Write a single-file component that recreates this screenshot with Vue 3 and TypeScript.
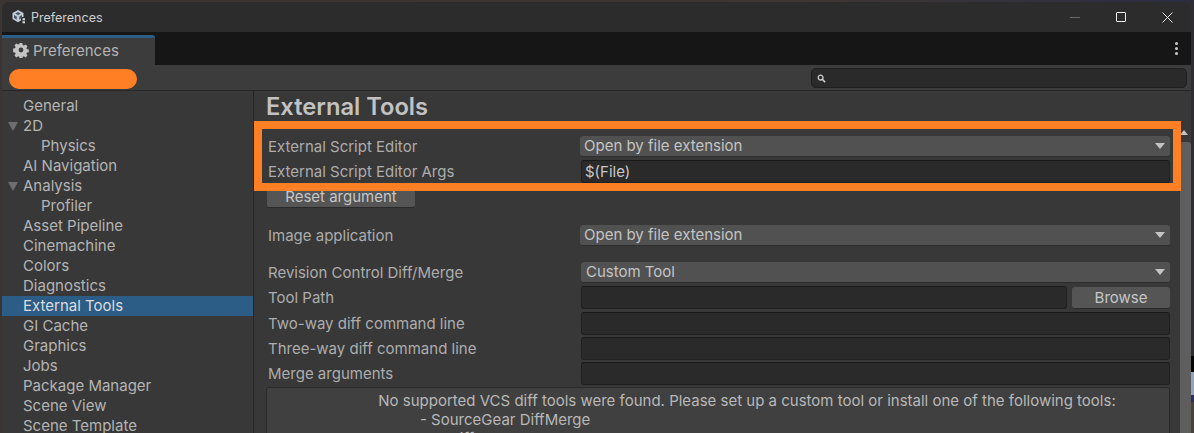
<script setup lang="ts">
interface Cat { label: string; level: number; open?: boolean; selected?: boolean }
const cats: Cat[] = [
  { label: 'General', level: 0 },
  { label: '2D', level: 0, open: true },
  { label: 'Physics', level: 1 },
  { label: 'AI Navigation', level: 0 },
  { label: 'Analysis', level: 0, open: true },
  { label: 'Profiler', level: 1 },
  { label: 'Asset Pipeline', level: 0 },
  { label: 'Cinemachine', level: 0 },
  { label: 'Colors', level: 0 },
  { label: 'Diagnostics', level: 0 },
  { label: 'External Tools', level: 0, selected: true },
  { label: 'GI Cache', level: 0 },
  { label: 'Graphics', level: 0 },
  { label: 'Jobs', level: 0 },
  { label: 'Package Manager', level: 0 },
  { label: 'Scene View', level: 0 },
  { label: 'Scene Template', level: 0 },
]
</script>

<template>
  <div class="desktop">
    <div class="window">
      <header class="titlebar">
        <svg class="unity" width="16" height="16" viewBox="0 0 16 16">
          <path d="M7 1 12.5 4V10L7 13.2 1.5 10V4Z" fill="#c3ccd6" />
          <path d="M7 3 4.2 4.6 7 6.2 9.8 4.6ZM3 6V9L5.8 10.7V7.6ZM11 6 8.2 7.6V10.7L11 9Z" fill="#4a5a6e" />
          <rect x="10" y="8" width="5.5" height="7.5" rx="1.5" fill="#2c2c2c" />
          <path d="M11.5 9.2h2.5v2h-2.5ZM11.5 12.2h2.5v2h-2.5Z" fill="#d4dae0" />
        </svg>
        <span class="title">Preferences</span>
        <div class="caption">
          <span class="min"></span>
          <span class="max"></span>
          <svg width="11" height="11" viewBox="0 0 11 11"><path d="M.5.5 10.5 10.5M10.5.5.5 10.5" stroke="#e8e8e8" stroke-width="1" fill="none" /></svg>
        </div>
      </header>

      <div class="tabstrip">
        <div class="tab">
          <svg width="16" height="16" viewBox="0 0 16 16">
            <path fill="#c4c4c4" fill-rule="evenodd" d="M6.7 1h2.6l.4 2 1.2.5 1.7-1.1 1.9 1.9-1.1 1.7.5 1.2 2 .4v2.6l-2 .4-.5 1.2 1.1 1.7-1.9 1.9-1.7-1.1-1.2.5-.4 2H6.7l-.4-2-1.2-.5-1.7 1.1-1.9-1.9 1.1-1.7-.5-1.2-2-.4V6.6l2-.4.5-1.2-1.1-1.7 1.9-1.9 1.7 1.1 1.2-.5ZM8 5.6a2.4 2.4 0 1 0 0 4.8 2.4 2.4 0 0 0 0-4.8Z" />
          </svg>
          <span>Preferences</span>
        </div>
        <div class="kebab"><i></i><i></i><i></i></div>
      </div>

      <div class="toolbar">
        <div class="pill"></div>
        <div class="search">
          <svg width="9" height="9" viewBox="0 0 9 9"><circle cx="3.6" cy="3.6" r="2.4" fill="none" stroke="#d0d0d0" stroke-width="1.3" /><path d="M5.4 5.4 8.2 8.2" stroke="#d0d0d0" stroke-width="1.5" /></svg>
        </div>
      </div>

      <div class="body">
        <nav class="sidebar">
          <div v-for="c in cats" :key="c.label" class="cat" :class="{ selected: c.selected, sub: c.level === 1 }">
            <span v-if="c.open" class="fold"></span>
            {{ c.label }}
          </div>
        </nav>

        <main class="main">
          <h1>External Tools</h1>

          <div class="row r-first">
            <label>External Script Editor</label>
            <div class="drop">Open by file extension<span class="arrow"></span></div>
          </div>
          <div class="row r-args">
            <label>External Script Editor Args</label>
            <div class="input">$(File)</div>
          </div>
          <button class="btn reset" type="button">Reset argument</button>

          <div class="row r-image">
            <label>Image application</label>
            <div class="drop">Open by file extension<span class="arrow"></span></div>
          </div>
          <div class="row r-rev">
            <label>Revision Control Diff/Merge</label>
            <div class="drop rev">Custom Tool<span class="arrow"></span></div>
          </div>
          <div class="row r-tool">
            <label>Tool Path</label>
            <div class="toolfield">
              <div class="input"></div>
              <button class="btn browse" type="button">Browse</button>
            </div>
          </div>
          <div class="row r-input r-two">
            <label>Two-way diff command line</label>
            <div class="input"></div>
          </div>
          <div class="row r-input">
            <label>Three-way diff command line</label>
            <div class="input"></div>
          </div>
          <div class="row r-input">
            <label>Merge arguments</label>
            <div class="input"></div>
          </div>

          <div class="help">
            <p>No supported VCS diff tools were found. Please set up a custom tool or install one of the following tools:</p>
            <p class="tool">- SourceGear DiffMerge</p>
            <p class="tool">- TkDiff</p>
          </div>
        </main>

        <div class="scrollbar">
          <span class="up"></span>
          <span class="thumb"></span>
        </div>

        <div class="highlight"></div>
      </div>
    </div>
  </div>
</template>

<style>
html, body { margin: 0; background: #2b2725; overflow: hidden; }
</style>

<style scoped>
.desktop {
  width: 1194px;
  height: 433px;
  padding: 2px 3px 0 2px;
  box-sizing: border-box;
  overflow: hidden;
  background:
    linear-gradient(180deg, #2f2d33 0 356px, #050505 356px 372px, #8fa6ba 372px 395px, #2a2f66 395px 402px, #4a4238 402px) right top / 3px 100% no-repeat,
    linear-gradient(90deg, #3a3432 0%, #3c3735 70%, #2b2c40 100%);
  font-family: Inter, "Liberation Sans", sans-serif;
  color: #c4c4c4;
}
.window {
  height: 431px;
  display: flex;
  flex-direction: column;
  background: #383838;
  border-radius: 7px 7px 0 0;
  overflow: hidden;
}
.titlebar {
  height: 30px;
  flex: none;
  display: flex;
  align-items: center;
  background: #2c2c2c;
  padding-left: 9px;
  box-sizing: border-box;
}
.title { margin-left: 4px; font-size: 12.5px; color: #cfcfcf; }
.caption { margin-left: auto; display: flex; align-items: center; padding-right: 18px; }
.min { width: 10px; height: 1px; background: #6a6a6a; margin-right: 36px; }
.max { width: 8px; height: 8px; border: 1px solid #f0f0f0; border-radius: 1px; margin-right: 36px; }
.tabstrip {
  height: 33px;
  flex: none;
  display: flex;
  background: #161616;
  justify-content: space-between;
}
.tab {
  width: 153px;
  margin-top: 3px;
  box-sizing: border-box;
  background: #3c3c3c;
  border-top: 3px solid #2c5d87;
  border-top-right-radius: 3px;
  display: flex;
  align-items: center;
  gap: 4px;
  padding: 0 0 3px 11px;
  font-size: 15px;
  color: #b4b4b4;
}
.kebab { display: flex; flex-direction: column; justify-content: center; gap: 2px; padding-right: 13px; }
.kebab i { width: 3px; height: 3px; background: #c8c8c8; border-radius: 50%; display: block; }
.toolbar {
  height: 26px;
  flex: none;
  box-sizing: border-box;
  background: #3c3c3c;
  display: flex;
  align-items: center;
  justify-content: space-between;
  padding: 0 4px 0 7px;
  border-bottom: 1px solid #262626;
}
.pill { width: 128px; height: 20px; border-radius: 10px; background: #ff8024; margin-top: 3px; }
.search {
  width: 376px;
  height: 20px;
  margin-top: 1px;
  box-sizing: border-box;
  background: #2a2a2a;
  border: 1px solid #1f1f1f;
  border-radius: 5px;
  display: flex;
  align-items: center;
  padding-left: 5px;
}
.body { flex: 1; display: flex; position: relative; min-height: 0; }
.sidebar {
  width: 252px;
  flex: none;
  box-sizing: border-box;
  padding-top: 5px;
  border-right: 1px solid #262626;
  overflow: hidden;
}
.cat {
  height: 20px;
  line-height: 20px;
  padding-left: 21px;
  font-size: 15px;
  color: #b4b4b4;
  position: relative;
  white-space: nowrap;
}
.cat.sub { padding-left: 39px; }
.cat.selected { background: #2c5d87; color: #dcdcdc; }
.fold {
  position: absolute;
  left: 6px;
  top: 6px;
  width: 0;
  height: 0;
  border-left: 5px solid transparent;
  border-right: 5px solid transparent;
  border-top: 9px solid #6e6e6e;
}
.main {
  flex: 1;
  min-width: 0;
  padding: 0 8px 0 12px;
  overflow: hidden;
}
h1 {
  margin: 0;
  height: 32px;
  line-height: 32px;
  font-size: 23.7px;
  font-weight: 600;
  color: #c2c2c2;
}
.row {
  display: grid;
  grid-template-columns: 312px 1fr;
  align-items: center;
  margin-left: 2px;
  font-size: 15px;
}
.row label { color: #adadad; white-space: nowrap; }
.r-first { margin-top: 13px; height: 21px; }
.r-args { margin-top: 3px; height: 23px; }
.r-image { margin-top: 17px; height: 21px; }
.r-rev { margin-top: 16px; height: 21px; }
.r-tool { margin-top: 3px; height: 23px; }
.r-input { margin-top: 2px; height: 23px; }
.r-two { margin-top: 3px; }
.drop {
  height: 100%;
  box-sizing: border-box;
  background: #515151;
  border-radius: 3px;
  border-bottom: 1px solid #2e2e2e;
  color: #c4c4c4;
  display: flex;
  align-items: center;
  justify-content: space-between;
  padding: 0 5px 1px 4px;
  white-space: nowrap;
}
.drop.rev { margin-left: 1px; padding-left: 5px; }
.arrow {
  width: 0;
  height: 0;
  border-left: 5px solid transparent;
  border-right: 5px solid transparent;
  border-top: 6px solid #c4c4c4;
}
.input {
  height: 100%;
  box-sizing: border-box;
  background: #2a2a2a;
  border: 1px solid #202020;
  border-top-color: #1a1a1a;
  border-radius: 3px;
  margin-left: 1px;
  color: #c8c8c8;
  padding: 0 3px;
  display: flex;
  align-items: center;
  min-width: 0;
}
.toolfield { display: flex; gap: 5px; height: 100%; }
.toolfield .input { flex: 1; }
.btn {
  display: block;
  box-sizing: border-box;
  background: #555555;
  border: 0;
  border-bottom: 1px solid #2a2a2a;
  border-radius: 3px;
  color: #c6c6c6;
  font: 15px Inter, "Liberation Sans", sans-serif;
  padding: 0;
}
.reset { width: 148px; height: 25px; margin: 0 0 0 1px; padding-top: 2px; }
.browse { width: 98px; height: 22px; margin-top: 1px; flex: none; }
.help {
  margin-top: 2px;
  height: 60px;
  box-sizing: border-box;
  background: #404040;
  border: 1px solid #2a2a2a;
  border-radius: 3px;
  font-size: 15px;
  line-height: 19px;
  color: #b8b8b8;
  text-align: center;
  padding: 3px 0 0 58px;
}
.help p { margin: 0; white-space: nowrap; }
.help .tool { text-align: left; margin-left: -58px; padding-left: 153px; }
.scrollbar {
  width: 13px;
  flex: none;
  display: flex;
  flex-direction: column;
  align-items: flex-end;
  position: relative;
}
.up {
  position: absolute;
  right: 3px;
  top: 39px;
  width: 0;
  height: 0;
  border-left: 4px solid transparent;
  border-right: 4px solid transparent;
  border-bottom: 5px solid #c4c4c4;
}
.thumb {
  margin-top: 51px;
  width: 11px;
  flex: 1;
  background: #5e5e5e;
  border-radius: 3px 3px 0 0;
}
.highlight {
  position: absolute;
  left: 252px;
  top: 30px;
  width: 927px;
  height: 70px;
  box-sizing: border-box;
  border: 8px solid #ff8024;
  pointer-events: none;
}
</style>
